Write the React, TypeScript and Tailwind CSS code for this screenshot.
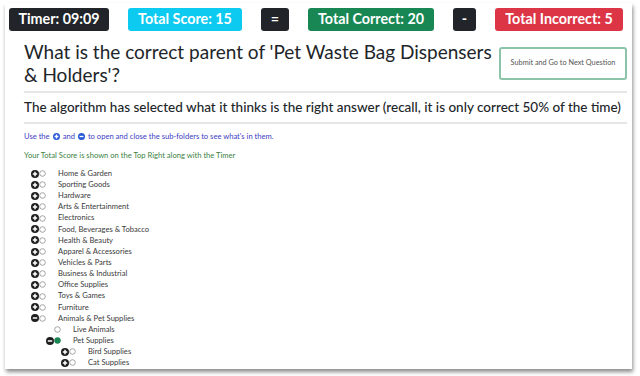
import React from "react";

function CircleIcon({ kind, dark = true }: { kind: "plus" | "minus"; dark?: boolean }) {
  return (
    <svg viewBox="0 0 16 16" className={dark ? "w-[8px] h-[8px] shrink-0" : "w-[7px] h-[7px] shrink-0"}>
      <circle cx="8" cy="8" r="8" fill={dark ? "#1f1f1f" : "#2a5bd7"} />
      {kind === "plus" ? (
        <path d="M8 3.6v8.8M3.6 8h8.8" stroke="white" strokeWidth="3" />
      ) : (
        <path d="M3.6 8h8.8" stroke="white" strokeWidth="3" />
      )}
    </svg>
  );
}

function Radio({ checked = false }: { checked?: boolean }) {
  return (
    <svg viewBox="0 0 14 14" className="w-[7px] h-[7px] shrink-0">
      {checked ? (
        <circle cx="7" cy="7" r="6" fill="#198754" stroke="#157347" strokeWidth="1" />
      ) : (
        <circle cx="7" cy="7" r="5.6" fill="white" stroke="#6b6b6b" strokeWidth="1.2" />
      )}
    </svg>
  );
}

type Item = { label: string; level: 0 | 1 | 2; toggle?: "plus" | "minus"; checked?: boolean };

const items: Item[] = [
  { label: "Home & Garden", level: 0, toggle: "plus" },
  { label: "Sporting Goods", level: 0, toggle: "plus" },
  { label: "Hardware", level: 0, toggle: "plus" },
  { label: "Arts & Entertainment", level: 0, toggle: "plus" },
  { label: "Electronics", level: 0, toggle: "plus" },
  { label: "Food, Beverages & Tobacco", level: 0, toggle: "plus" },
  { label: "Health & Beauty", level: 0, toggle: "plus" },
  { label: "Apparel & Accessories", level: 0, toggle: "plus" },
  { label: "Vehicles & Parts", level: 0, toggle: "plus" },
  { label: "Business & Industrial", level: 0, toggle: "plus" },
  { label: "Office Supplies", level: 0, toggle: "plus" },
  { label: "Toys & Games", level: 0, toggle: "plus" },
  { label: "Furniture", level: 0, toggle: "plus" },
  { label: "Animals & Pet Supplies", level: 0, toggle: "minus" },
  { label: "Live Animals", level: 1 },
  { label: "Pet Supplies", level: 1, toggle: "minus", checked: true },
  { label: "Bird Supplies", level: 2, toggle: "plus" },
  { label: "Cat Supplies", level: 2, toggle: "plus" },
];

const indent = ["pl-[7px]", "pl-[22px]", "pl-[37px]"];

function Badge({ children, className }: { children: React.ReactNode; className: string }) {
  return (
    <div className={`h-[23px] rounded-[3px] flex items-center justify-center text-white font-bold text-[14.3px] leading-none ${className}`}>
      {children}
    </div>
  );
}

export default function App() {
  return (
    <div className="w-[640px] h-[376px] bg-white overflow-hidden font-[Lato,sans-serif]">
      <div className="ml-[5px] mt-[3px] w-[627px] h-[366px] bg-white shadow-[1px_3px_4px_rgba(0,0,0,0.45)] overflow-hidden">
        <div className="flex gap-[19px] pl-[4px] pt-[5px]">
          <Badge className="w-[100px] bg-[#212529]">Timer: 09:09</Badge>
          <Badge className="w-[114px] bg-[#0dcaf0]">Total Score: 15</Badge>
          <Badge className="w-[28px] bg-[#212529]">=</Badge>
          <Badge className="w-[126px] bg-[#198754]">Total Correct: 20</Badge>
          <Badge className="w-[23px] bg-[#212529]">-</Badge>
          <Badge className="w-[128px] bg-[#dc3545]">Total Incorrect: 5</Badge>
        </div>
        <div className="pl-[19px] pr-[5px]">
          <div className="flex items-center justify-between mt-[9px]">
            <h1 className="w-[474px] text-[19px] leading-[23px] text-[#212529] font-normal">
              What is the correct parent of 'Pet Waste Bag Dispensers &amp; Holders'?
            </h1>
            <button className="w-[128px] h-[33px] border-2 border-[#8cc4aa] rounded-[3px] text-[7.3px] text-[#555] bg-white">
              Submit and Go to Next Question
            </button>
          </div>
          <div className="mt-[5px] h-[2px] bg-[#e6e6e6]" />
          <div className="mt-[4px] text-[13.5px] leading-[20px] font-medium text-[#212529] whitespace-nowrap">
            The algorithm has selected what it thinks is the right answer (recall, it is only correct 50% of the time)
          </div>
          <div className="mt-[5px] h-[2px] bg-[#e6e6e6]" />
          <div className="mt-[7px] flex items-center text-[7.6px] leading-[11px] text-[#3d3dc4]">
            <span>Use the</span>
            <span className="mx-[3px] flex"><CircleIcon kind="plus" dark={false} /></span>
            <span>and</span>
            <span className="mx-[3px] flex"><CircleIcon kind="minus" dark={false} /></span>
            <span>to open and close the sub-folders to see what's in them.</span>
          </div>
          <div className="mt-[8px] text-[7.6px] leading-[11px] text-[#3d7f3f]">
            Your Total Score is shown on the Top Right along with the Timer
          </div>
          <div className="mt-[7px]">
            {items.map((it) => (
              <div key={it.label} className={`flex items-center h-[11.15px] text-[7.6px] text-[#3a3a3a] ${indent[it.level]}`}>
                <div className="w-[8px] shrink-0 flex">
                  {it.toggle ? <CircleIcon kind={it.toggle} /> : null}
                </div>
                <Radio checked={it.checked} />
                <span className="ml-[12px] whitespace-nowrap">{it.label}</span>
              </div>
            ))}
          </div>
        </div>
      </div>
    </div>
  );
}
